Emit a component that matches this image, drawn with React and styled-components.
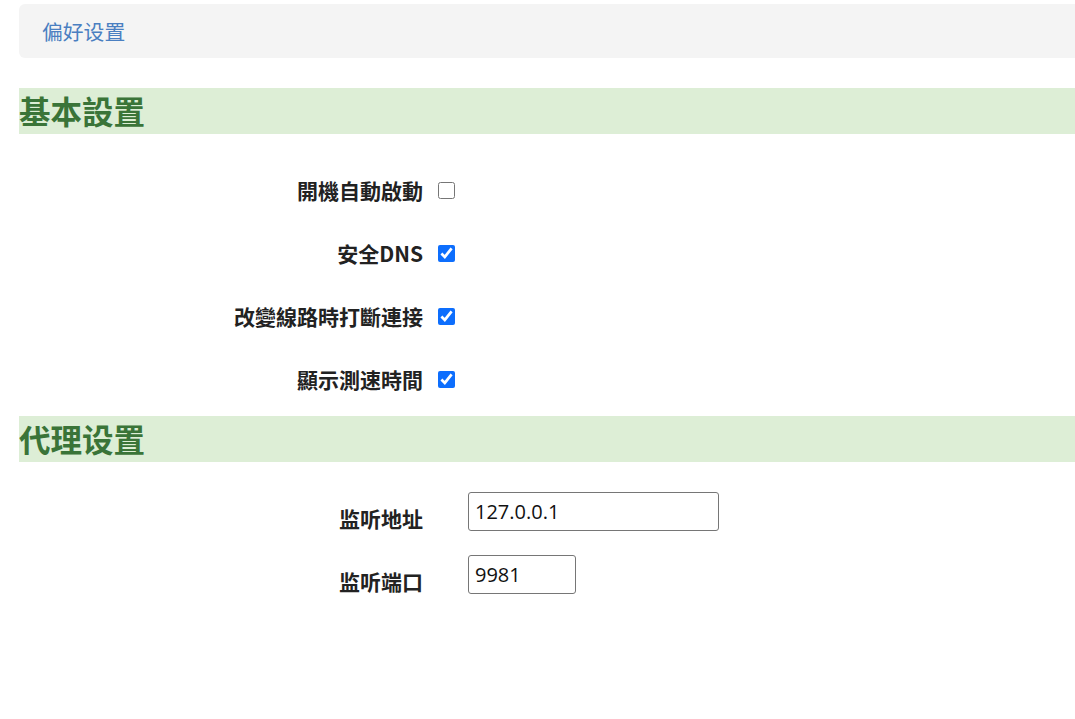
import React from 'react';
import styled, { createGlobalStyle } from 'styled-components';

const GlobalStyle = createGlobalStyle`
	html, body {
		margin: 0;
		padding: 0;
		background: #fff;
		font-family: "Noto Sans CJK SC", "Noto Sans CJK TC", "Noto Sans", sans-serif;
	}
`;

const Page = styled.div`
	padding: 4px 0 0 19px;
`;

// the panel runs on past the right edge of the window, so no corners there
const Breadcrumb = styled.div`
	display: flex;
	align-items: center;
	height: 54px;
	padding-left: 23px;
	background: #f4f4f4;
	border-radius: 6px 0 0 6px;
	color: #4a7fc1;
	font-size: 20.8px;
`;

const SectionTitle = styled.h2`
	margin: ${(props) => props.top}px 0 0;
	height: 46px;
	display: flex;
	align-items: center;
	background: #ddeed6;
	color: #3a7438;
	font-size: 31.5px;
	font-weight: 700;
	line-height: 1;
`;

const Rows = styled.div`
	padding-top: ${(props) => props.top}px;
`;

const Row = styled.div`
	display: flex;
	align-items: ${(props) => (props.input ? 'flex-start' : 'center')};
	height: 63px;
	gap: ${(props) => (props.input ? 45 : 15)}px;
`;

const Label = styled.label`
	width: 404px;
	text-align: right;
	font-size: 21px;
	font-weight: 700;
	color: #222;
	line-height: 27px;
	padding-top: ${(props) => props.offset || 0}px;
`;

const Check = styled.input.attrs({ type: 'checkbox' })`
	width: 17px;
	height: 17px;
	margin: 0;
	accent-color: #0d6efd;
`;

const TextInput = styled.input`
	box-sizing: border-box;
	width: ${(props) => props.w}px;
	height: 39px;
	padding: 0 6px;
	border: 1px solid #767676;
	border-radius: 3px;
	font-family: "Open Sans", "Noto Sans", sans-serif;
	font-size: 20px;
	color: #111;
	outline: none;
`;

const App = () => (
	<Page>
		<GlobalStyle />
		<Breadcrumb>偏好设置</Breadcrumb>

		<SectionTitle top={30}>基本設置</SectionTitle>
		<Rows top={24.5}>
			<Row>
				<Label>開機自動啟動</Label>
				<Check />
			</Row>
			<Row>
				<Label>安全DNS</Label>
				<Check defaultChecked />
			</Row>
			<Row>
				<Label>改變線路時打斷連接</Label>
				<Check defaultChecked />
			</Row>
			<Row>
				<Label>顯示測速時間</Label>
				<Check defaultChecked />
			</Row>
		</Rows>

		<SectionTitle top={5.5}>代理设置</SectionTitle>
		<Rows top={30}>
			<Row input>
				<Label offset={13}>监听地址</Label>
				<TextInput w={251} defaultValue="127.0.0.1" />
			</Row>
			<Row input>
				<Label offset={13}>监听端口</Label>
				<TextInput w={108} defaultValue="9981" />
			</Row>
		</Rows>
	</Page>
);

export default App;
